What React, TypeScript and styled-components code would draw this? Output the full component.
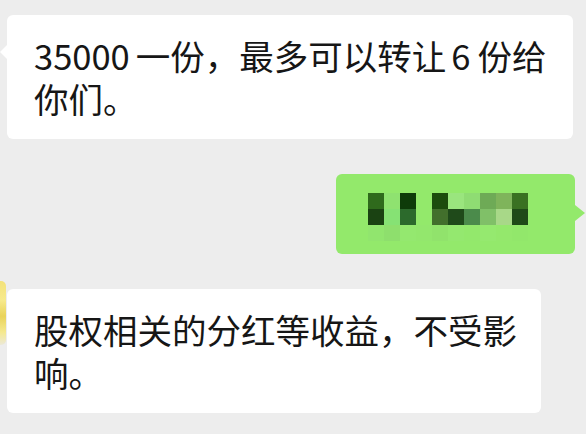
import styled, { createGlobalStyle } from 'styled-components';

const GlobalStyle = createGlobalStyle`
    html, body {
        margin: 0;
        padding: 0;
        background: #ededed;
    }
    body {
        font-family: 'Noto Sans CJK SC', 'Noto Sans', sans-serif;
        color: #161616;
    }
`;

const Page = styled.div`
    width: 586px;
    height: 434px;
    box-sizing: border-box;
    padding-top: 15px;
    background: #ededed;
    display: flex;
    flex-direction: column;
    gap: 35px;
    overflow: hidden;
`;

const Row = styled.div<{ outgoing?: boolean }>`
    display: flex;
    align-items: flex-start;
    justify-content: ${({ outgoing }) => (outgoing ? 'flex-end' : 'flex-start')};
    padding-left: ${({ outgoing }) => (outgoing ? '0' : '7px')};
    padding-right: ${({ outgoing }) => (outgoing ? '11px' : '0')};
`;

const AvatarRow = styled(Row)`
    padding-left: 0;
`;

// the sender's avatar, cut off by the left edge of the shot
const AvatarEdge = styled.div`
    width: 6px;
    height: 64px;
    margin-top: -8px;
    margin-right: 1px;
    border-radius: 0 5px 5px 0;
    background: linear-gradient(
        180deg,
        #f3e27a 0%,
        #f7ea8c 30%,
        #e9d35a 55%,
        #f5e98f 80%,
        #ece9d8 100%
    );
`;

const Bubble = styled.div<{ width: number; withTail?: boolean }>`
    position: relative;
    width: ${({ width }) => width}px;
    box-sizing: border-box;
    padding: 19px 16px 19px 27px;
    background: #ffffff;
    border-radius: 6px;
    font-size: 34.5px;
    line-height: 43px;
    white-space: nowrap;

    ${({ withTail }) =>
        withTail &&
        `
        &::before {
            content: '';
            position: absolute;
            left: -7px;
            top: 30px;
            border-style: solid;
            border-width: 7px 7px 7px 0;
            border-color: transparent #ffffff transparent transparent;
        }
    `}
`;

// latin run inside chinese text, with the small gap the phone adds
const Latin = styled.span<{ before?: number; after?: number }>`
    margin-left: ${({ before }) => before ?? 0}px;
    margin-right: ${({ after }) => after ?? 0}px;
`;

const GreenBubble = styled.div`
    position: relative;
    width: 239px;
    height: 80px;
    box-sizing: border-box;
    padding: 19px 0 0 32px;
    background: #93e96b;
    border-radius: 6px;

    &::after {
        content: '';
        position: absolute;
        right: -10px;
        top: 31px;
        border-style: solid;
        border-width: 8px 0 8px 10px;
        border-color: transparent transparent transparent #93e96b;
    }
`;

const Mosaic = styled.div`
    display: grid;
    grid-template-columns: repeat(10, 16px);
    grid-auto-rows: 16px;
`;

const Cell = styled.div<{ tint: string }>`
    background: ${({ tint }) => tint};
`;

const G = '#93e96b';

const mosaic: string[] = [
    '#2f6a1c', '#8fe270', '#0e3b09', G, '#1c4c0d', '#9ae57e', '#8fdc73', '#6eaa56', '#7fb45b', '#3a7122',
    '#1a4212', '#86e274', '#2c6a2c', G, '#426f2c', '#1f4a1a', '#4b8b4b', '#80c068', '#a8d888', '#1f4a18',
    '#91e56e', '#8edf6d', '#94e86f', '#93e76d', '#91e36c', '#94e86f', '#93e86c', '#95e96f', '#94e86c', '#92e76b'
];

export default function App() {
    return (
        <>
            <GlobalStyle />
            <Page>
                <Row>
                    <Bubble width={566} withTail>
                        <Latin after={6}>35000</Latin>一份，最多可以转让<Latin before={5} after={7}>6</Latin>份给
                        <br />
                        你们。
                    </Bubble>
                </Row>
                <Row outgoing>
                    <GreenBubble>
                        <Mosaic>
                            {mosaic.map((tint, i) => (
                                <Cell key={i} tint={tint} />
                            ))}
                        </Mosaic>
                    </GreenBubble>
                </Row>
                <AvatarRow>
                    <AvatarEdge />
                    <Bubble width={534}>
                        股权相关的分红等收益，不受影
                        <br />
                        响。
                    </Bubble>
                </AvatarRow>
            </Page>
        </>
    );
}
